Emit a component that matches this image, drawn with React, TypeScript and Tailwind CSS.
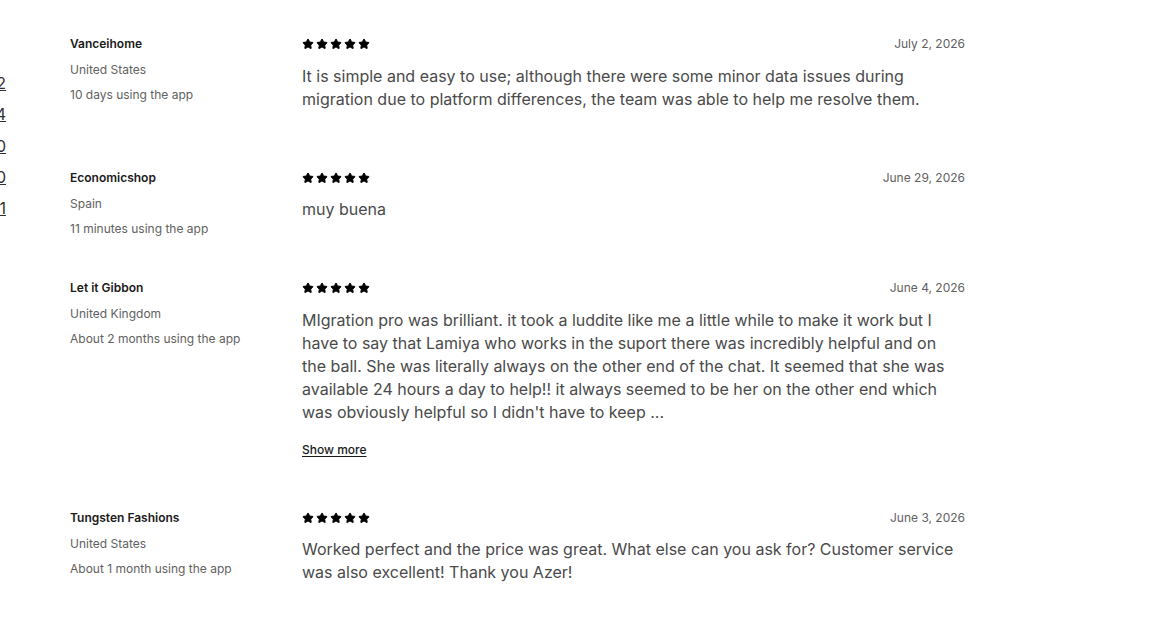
import { Star } from "lucide-react";

type Review = {
  name: string;
  country: string;
  usage: string;
  date: string;
  text: string;
  showMore?: boolean;
};

const reviews: Review[] = [
  {
    name: "Vanceihome",
    country: "United States",
    usage: "10 days using the app",
    date: "July 2, 2026",
    text: "It is simple and easy to use; although there were some minor data issues during migration due to platform differences, the team was able to help me resolve them.",
  },
  {
    name: "Economicshop",
    country: "Spain",
    usage: "11 minutes using the app",
    date: "June 29, 2026",
    text: "muy buena",
  },
  {
    name: "Let it Gibbon",
    country: "United Kingdom",
    usage: "About 2 months using the app",
    date: "June 4, 2026",
    text: "MIgration pro was brilliant. it took a luddite like me a little while to make it work but I have to say that Lamiya who works in the suport there was incredibly helpful and on the ball. She was literally always on the other end of the chat. It seemed that she was available 24 hours a day to help!! it always seemed to be her on the other end which was obviously helpful so I didn't have to keep ...",
    showMore: true,
  },
  {
    name: "Tungsten Fashions",
    country: "United States",
    usage: "About 1 month using the app",
    date: "June 3, 2026",
    text: "Worked perfect and the price was great. What else can you ask for? Customer service was also excellent! Thank you Azer!",
  },
];

const counts = ["52", "14", "10", "30", "11"];

function Stars() {
  return (
    <div className="flex items-center gap-0.5">
      {[0, 1, 2, 3, 4].map((i) => (
        <Star key={i} className="w-3 h-3 fill-black text-black" strokeWidth={2} />
      ))}
    </div>
  );
}

function ReviewRow({ review }: { review: Review }) {
  return (
    <div className="grid grid-cols-[232px_1fr] pb-[57px]">
      {/* meta column does not push the row height; the review body does */}
      <div className="flex flex-col h-0">
        <p className="h-5 leading-5 text-xs font-semibold text-[#1a1a1a]">{review.name}</p>
        <p className="mt-[3px] leading-[25px] text-xs text-[#616161]">{review.country}</p>
        <p className="leading-[25px] text-xs text-[#616161]">{review.usage}</p>
      </div>
      <div className="flex flex-col">
        <div className="h-5 flex items-center justify-between">
          <Stars />
          <span className="text-xs text-[#616161]">{review.date}</span>
        </div>
        <p className="mt-[10.5px] pr-1 text-base leading-[23px] text-[#4a4a4a]">{review.text}</p>
        {review.showMore && (
          <button className="mt-[18px] -mb-[7px] self-start text-xs leading-4 font-medium text-[#1a1a1a] underline underline-offset-2">
            Show more
          </button>
        )}
      </div>
    </div>
  );
}

export default function App() {
  return (
    <div
      className="w-[1165px] h-[624px] bg-white overflow-hidden flex"
      style={{ fontFamily: "Inter, 'Noto Sans', sans-serif" }}
    >
      <div className="w-[6px] shrink-0 overflow-hidden pt-[71px]">
        {counts.map((c, i) => (
          <div key={i} className="flex justify-end h-[31.25px] leading-[31px]">
            <span className="whitespace-nowrap text-base text-[#303030] underline">{c}</span>
          </div>
        ))}
      </div>
      <div className="ml-16 w-[895px] pt-[34px] flex flex-col">
        {reviews.map((r) => (
          <ReviewRow key={r.name} review={r} />
        ))}
      </div>
    </div>
  );
}
